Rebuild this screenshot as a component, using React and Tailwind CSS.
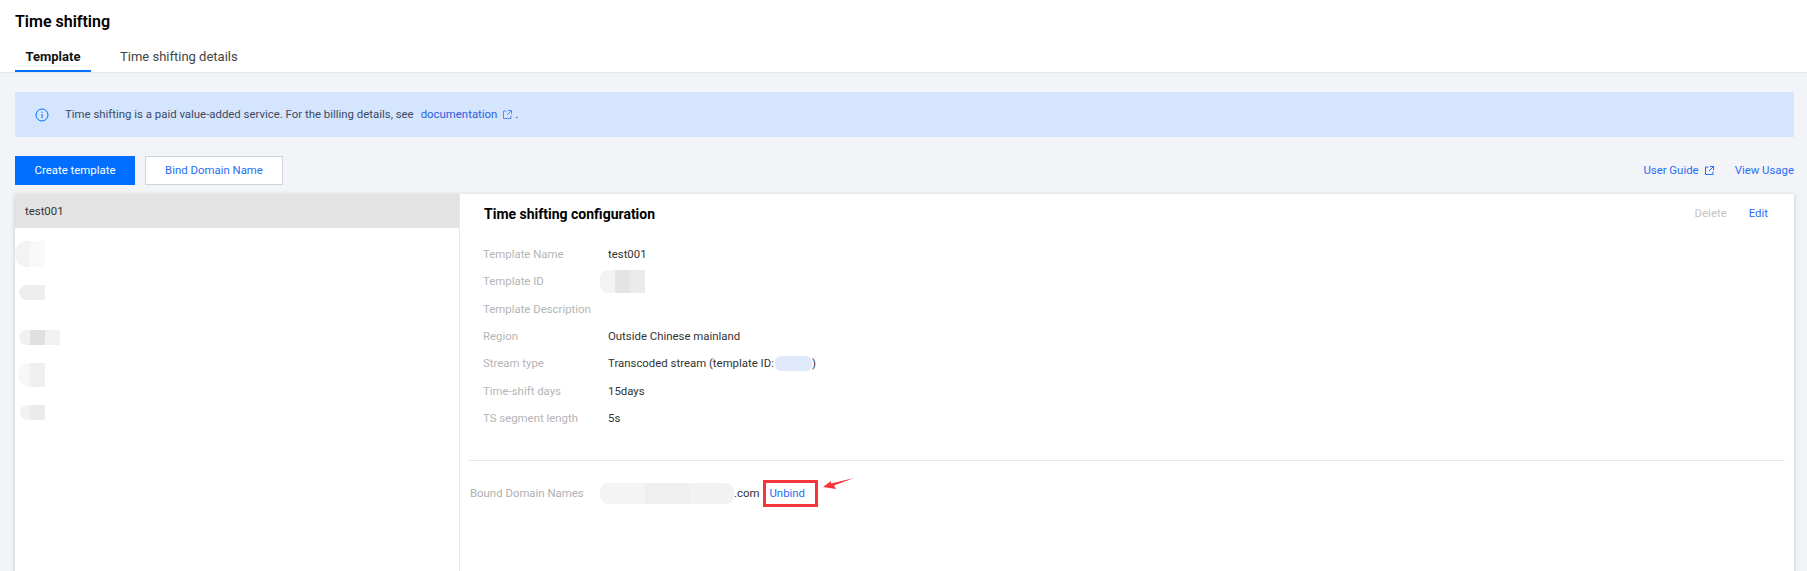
const ExternalIcon = ({ className }) => (
  <svg className={className} width="9" height="9" viewBox="0 0 9 9" fill="none" stroke="currentColor" strokeWidth="1">
    <path d="M3.500 1H.5v7.500H8V5.500" />
    <path d="M5 .5h3.500V4M8.500.5 4 5" />
  </svg>
)

// smudges covering the redacted template names
const Smudge = ({ className, blocks }) => (
  <div className={`flex overflow-hidden ${className}`}>
    {blocks.map((b, i) => (
      <div key={i} className={b} />
    ))}
  </div>
)

const details = [
  ['Template Name', 'test001'],
  ['Template ID', null],
  ['Template Description', ''],
  ['Region', 'Outside Chinese mainland'],
  ['Stream type', 'stream'],
  ['Time-shift days', '15days'],
  ['TS segment length', '5s'],
]

export default function App() {
  return (
    <div className="h-[571px] overflow-hidden bg-[#f2f4f8] text-[11.4px] text-[#222] font-['Roboto','Liberation_Sans',sans-serif]">
      <div className="bg-white h-[73px] border-b border-[#e4e7ee] px-[15px]">
        <h1 className="pt-[12px] h-[44px] text-[16px] leading-[20px] font-semibold text-black">Time shifting</h1>
        <div className="flex h-[28px]">
          <div className="w-[76px] h-[28px] border-b-2 border-[#006eff] text-center text-[13px] leading-[26px] font-bold text-[#111]">Template</div>
          <div className="ml-[29px] text-[13px] leading-[26px] text-[#444]">Time shifting details</div>
        </div>
      </div>

      <div className="pl-[15px] pr-[13px]">
        <div className="mt-[19px] h-[45px] bg-[#d4e5fd] flex items-center pl-[20px] text-[#3d4a66]">
          <svg width="14" height="14" viewBox="0 0 14 14" fill="none" stroke="#006eff" strokeWidth="1">
            <circle cx="7" cy="7" r="6" />
            <path d="M7 6v4.200M7 3.700v1.200" />
          </svg>
          <span className="ml-[16px]">Time shifting is a paid value-added service. For the billing details, see</span>
          <a className="ml-[7px] text-[#2c5fe0]">documentation</a>
          <ExternalIcon className="ml-[6px] text-[#5a8cf0]" />
          <span className="ml-[3px]">.</span>
        </div>

        <div className="mt-[19px] flex items-center h-[29px]">
          <button className="w-[120px] h-[29px] bg-[#006eff] text-white">Create template</button>
          <button className="ml-[10px] w-[138px] h-[29px] bg-white border border-[#cfd5de] text-[#2a6df4]">Bind Domain Name</button>
          <a className="ml-auto text-[#2a6df4]">User Guide</a>
          <ExternalIcon className="ml-[6px] text-[#2a6df4]" />
          <a className="ml-[21px] text-[#2a6df4]">View Usage</a>
        </div>

        <div className="mt-[9px] h-[400px] flex bg-white shadow-[0_1px_4px_rgba(54,58,80,0.25)]">
          <div className="w-[445px] shrink-0 border-r border-[#e8e8e8]">
            <div className="h-[34px] bg-[#e3e3e3] pl-[10px] leading-[34px] text-[#333]">test001</div>
            <div className="relative h-[300px]">
              <Smudge className="absolute left-0 top-[13px] w-[30px] h-[26px] rounded-l-[12px]" blocks={['w-[15px] bg-[#f3f3f3]', 'w-[15px] bg-[#f8f9f8]']} />
              <Smudge className="absolute left-[4px] top-[57px] w-[26px] h-[15px] rounded-l-[8px]" blocks={['w-full bg-[#eeeeee]']} />
              <Smudge className="absolute left-[4px] top-[102px] w-[41px] h-[15px] rounded-l-[8px]" blocks={['w-[11px] bg-[#f1f1f1]', 'w-[15px] bg-[#dfe0e0]', 'w-[15px] bg-[#f1f1f1]']} />
              <Smudge className="absolute left-[3px] top-[135px] w-[27px] h-[24px] rounded-l-[12px]" blocks={['w-[12px] bg-[#f7f7f6]', 'w-[15px] bg-[#f1f0f0]']} />
              <Smudge className="absolute left-[5px] top-[177px] w-[25px] h-[15px] rounded-l-[8px]" blocks={['w-[10px] bg-[#f2f2f1]', 'w-[15px] bg-[#ebebeb]']} />
            </div>
          </div>

          <div className="flex-1 min-w-0">
            <div className="pl-[24px] pr-[26px] pt-[6px] flex items-center justify-between h-[34px]">
              <h2 className="text-[14px] font-bold text-black">Time shifting configuration</h2>
              <div className="flex gap-[22px]">
                <span className="text-[#c4c4c4]">Delete</span>
                <a className="text-[#2a6df4]">Edit</a>
              </div>
            </div>
            <div className="pl-[23px] pt-[13px] h-[232px]">
              {details.map(([label, value]) => (
                <div key={label} className="flex h-[27.3px] items-center">
                  <span className="w-[125px] text-[#b5b5b5]">{label}</span>
                  {value === 'stream' ? (
                    <span className="flex items-center text-[#333]">
                      Transcoded stream (template ID:
                      <span className="ml-[1px] w-[37px] h-[15px] rounded-[6px] bg-[#e0e9fb]" />
                      )
                    </span>
                  ) : value === null ? (
                    <Smudge className="-ml-[8px] w-[45px] h-[23px] rounded-l-[8px]" blocks={['w-[15px] bg-[#f3f3f3]', 'w-[15px] bg-[#e4e4e4]', 'w-[15px] bg-[#ebebeb]']} />
                  ) : (
                    <span className="text-[#333]">{value}</span>
                  )}
                </div>
              ))}
            </div>
            <div className="ml-[9px] mr-[9px] border-t border-[#e4e7ee] pt-[19px] flex items-center">
              <span className="w-[131px] pl-[1px] text-[#b0b0b0]">Bound Domain Names</span>
              <Smudge className="w-[134px] h-[21px] rounded-[8px]" blocks={['w-[45px] bg-[#f4f4f4]', 'w-[45px] bg-[#efefef]', 'w-[44px] bg-[#f2f2f2]']} />
              <span className="text-[#333]">.com</span>
              <div className="relative ml-[4px] w-[55px] h-[27px] border-[3px] border-[#f7343a] flex items-center pl-[3px]">
                <a className="text-[#2a6df4]">Unbind</a>
                <svg className="absolute left-[57px] top-[-5px]" width="31" height="12" viewBox="0 0 31 12" fill="#f7343a">
                  <path d="M0 9 8 3 8 5.500 31 0 11 7.500 13 11Z" />
                </svg>
              </div>
            </div>
          </div>
        </div>
      </div>
    </div>
  )
}
